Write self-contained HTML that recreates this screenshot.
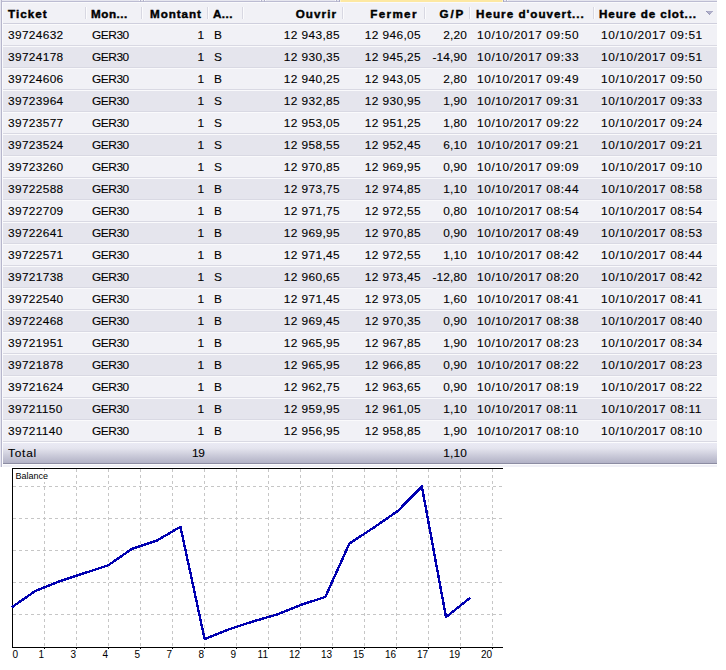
<!DOCTYPE html>
<html><head><meta charset="utf-8">
<style>
:root{--odd:#f1f1f6;--even:#e5e5ed;--sepc:#d9d9e3;--wl:#fafafc;}
html,body{margin:0;padding:0;background:#fff;width:726px;height:670px;overflow:hidden;position:relative;}
.abs,.row,.sep,.t,.lab{position:absolute;}
.t{font-family:"Liberation Sans",sans-serif;font-size:11px;line-height:22px;height:22px;white-space:pre;color:#000;-webkit-text-stroke:0.1px #000;}
.b{font-weight:bold;-webkit-text-stroke:0.4px #000;}
.row{left:3px;width:714px;height:20px;border-top:1px solid var(--wl);border-bottom:1px solid var(--sepc);}
.sep{top:7px;width:1px;height:12px;background:#d8d8e2;border-right:1px solid #fbfbfd;}
.lab{font-family:"Liberation Sans",sans-serif;font-size:10px;line-height:12px;white-space:pre;color:#000;}
svg{position:absolute;left:0;top:0;}
.g{stroke:#c6c6c6;stroke-width:1;stroke-dasharray:3 3;stroke-dashoffset:0;}
.gh{stroke:#c6c6c6;stroke-width:1;stroke-dasharray:3 3;}
</style></head><body>
<!-- table frame -->
<div class="abs" style="left:0;top:0;width:717px;height:467px;background:#e6e6ef"></div>
<div class="abs" style="left:1px;top:0;width:1px;height:467px;background:#b6b6cc"></div>
<div class="abs" style="left:2px;top:1px;width:715px;height:1px;background:#bcbcd2"></div>
<div class="abs" style="left:2px;top:2px;width:715px;height:1px;background:#fafafc"></div>
<div class="abs" style="left:2px;top:2px;width:1px;height:462px;background:#fafafc"></div>
<div class="abs" style="left:341px;top:0;width:161px;height:2px;background:#fde8a2"></div>
<div class="abs" style="left:139px;top:0;width:1px;height:1px;background:#fbfbfd"></div><div class="abs" style="left:140px;top:0;width:1px;height:2px;background:#b4b4cc"></div><div class="abs" style="left:141px;top:0;width:2px;height:1px;background:#ececf3"></div><div class="abs" style="left:143px;top:0;width:1px;height:2px;background:#b4b4cc"></div><div class="abs" style="left:144px;top:0;width:1px;height:1px;background:#fbfbfd"></div><div class="abs" style="left:260px;top:0;width:1px;height:1px;background:#fbfbfd"></div><div class="abs" style="left:261px;top:0;width:1px;height:2px;background:#b4b4cc"></div><div class="abs" style="left:262px;top:0;width:2px;height:1px;background:#ececf3"></div><div class="abs" style="left:264px;top:0;width:1px;height:2px;background:#b4b4cc"></div><div class="abs" style="left:265px;top:0;width:1px;height:1px;background:#fbfbfd"></div><div class="abs" style="left:335px;top:0;width:1px;height:1px;background:#fbfbfd"></div><div class="abs" style="left:336px;top:0;width:1px;height:2px;background:#b4b4cc"></div><div class="abs" style="left:337px;top:0;width:2px;height:1px;background:#ececf3"></div><div class="abs" style="left:339px;top:0;width:1px;height:2px;background:#a8a8c6"></div><div class="abs" style="left:340px;top:0;width:1px;height:2px;background:#fff3c4"></div><div class="abs" style="left:502px;top:0;width:1px;height:2px;background:#fff3c4"></div><div class="abs" style="left:503px;top:0;width:1px;height:2px;background:#a8a8c6"></div><div class="abs" style="left:504px;top:0;width:2px;height:1px;background:#ececf3"></div><div class="abs" style="left:506px;top:0;width:1px;height:2px;background:#b4b4cc"></div><div class="abs" style="left:507px;top:0;width:1px;height:1px;background:#fbfbfd"></div>
<div class="abs" style="left:3px;top:3px;width:714px;height:20px;background:#f1f1f6"></div>
<div class="abs" style="left:3px;top:23px;width:714px;height:1px;background:#cfcfdd"></div>
<div class="sep" style="left:85px"></div>
<div class="sep" style="left:141px"></div>
<div class="sep" style="left:207px"></div>
<div class="sep" style="left:242px"></div>
<div class="sep" style="left:342px"></div>
<div class="sep" style="left:424px"></div>
<div class="sep" style="left:469px"></div>
<div class="sep" style="left:593px"></div>
<div class="abs" style="left:706px;top:11px;width:7px;height:1px;background:#acacc8"></div>
<div class="abs" style="left:707px;top:12px;width:5px;height:1px;background:#b4b4cc"></div>
<div class="abs" style="left:708px;top:13px;width:3px;height:1px;background:#a8a8c4"></div>
<div class="abs" style="left:709px;top:14px;width:1px;height:1px;background:#9c9cbc"></div>
<div class="abs" style="left:706px;top:11px;width:1px;height:1px;background:#9494b6"></div>
<div class="abs" style="left:707px;top:12px;width:1px;height:1px;background:#9898b8"></div>
<div class="abs" style="left:708px;top:13px;width:1px;height:1px;background:#9898b8"></div>
<div class="row" style="top:24px;background:var(--odd)"></div>
<div class="row" style="top:46px;background:var(--even)"></div>
<div class="row" style="top:68px;background:var(--odd)"></div>
<div class="row" style="top:90px;background:var(--even)"></div>
<div class="row" style="top:112px;background:var(--odd)"></div>
<div class="row" style="top:134px;background:var(--even)"></div>
<div class="row" style="top:156px;background:var(--odd)"></div>
<div class="row" style="top:178px;background:var(--even)"></div>
<div class="row" style="top:200px;background:var(--odd)"></div>
<div class="row" style="top:222px;background:var(--even)"></div>
<div class="row" style="top:244px;background:var(--odd)"></div>
<div class="row" style="top:266px;background:var(--even)"></div>
<div class="row" style="top:288px;background:var(--odd)"></div>
<div class="row" style="top:310px;background:var(--even)"></div>
<div class="row" style="top:332px;background:var(--odd)"></div>
<div class="row" style="top:354px;background:var(--even)"></div>
<div class="row" style="top:376px;background:var(--odd)"></div>
<div class="row" style="top:398px;background:var(--even)"></div>
<div class="row" style="top:420px;background:var(--odd)"></div>
<div class="abs" style="left:3px;top:442px;width:714px;height:1px;background:#fcfcfe"></div>
<div class="abs" style="left:3px;top:443px;width:714px;height:20px;background:linear-gradient(#eaeaf4 0%,#e5e5ef 25%,#cbcbda 62%,#b2b2c6 100%)"></div>
<div class="abs" style="left:3px;top:463px;width:714px;height:1px;background:#8c8ca2"></div>
<div class="abs" style="left:3px;top:464px;width:714px;height:1px;background:#fbfbfd"></div>
<div class="abs" style="left:3px;top:465px;width:714px;height:2px;background:#f0f0f6"></div>
<div class="abs" style="left:2px;top:464px;width:1px;height:3px;background:#fafafc"></div>
<div class="t b" style="left:7.97px;top:3px;letter-spacing:0.964px;transform:scaleX(1.06);transform-origin:0 0">Ticket</div>
<div class="t b" style="left:91.47px;top:3px;letter-spacing:0.493px;transform:scaleX(1.06);transform-origin:0 0">Mon...</div>
<div class="t b r" style="right:523.98px;top:3px;letter-spacing:0.844px;transform:scaleX(1.06);transform-origin:100% 0">Montant</div>
<div class="t b" style="left:213.17px;top:3px;letter-spacing:0.424px;transform:scaleX(1.06);transform-origin:0 0">A...</div>
<div class="t b r" style="right:388.37px;top:3px;letter-spacing:1.038px;transform:scaleX(1.06);transform-origin:100% 0">Ouvrir</div>
<div class="t b r" style="right:307.86px;top:3px;letter-spacing:1.239px;transform:scaleX(1.06);transform-origin:100% 0">Fermer</div>
<div class="t b r" style="right:261.32px;top:3px;letter-spacing:1.656px;transform:scaleX(1.06);transform-origin:100% 0">G/P</div>
<div class="t b" style="left:475.97px;top:3px;letter-spacing:0.959px;transform:scaleX(1.06);transform-origin:0 0">Heure d'ouvert...</div>
<div class="t b" style="left:599.27px;top:3px;letter-spacing:0.850px;transform:scaleX(1.06);transform-origin:0 0">Heure de clot...</div>
<div class="t" style="left:8.46px;top:24px;letter-spacing:0.308px;transform:scaleX(1.08);transform-origin:0 0">39724632</div>
<div class="t" style="left:92.36px;top:24px;letter-spacing:-0.408px;transform:scaleX(1.08);transform-origin:0 0">GER30</div>
<div class="t r" style="right:521.76px;top:24px;letter-spacing:0.000px;transform:scaleX(1.08);transform-origin:100% 0">1</div>
<div class="t" style="left:214.46px;top:24px;letter-spacing:0.000px;transform:scaleX(1.08);transform-origin:0 0">B</div>
<div class="t r" style="right:386.49px;top:24px;letter-spacing:0.341px;transform:scaleX(1.08);transform-origin:100% 0">12 943,85</div>
<div class="t r" style="right:305.49px;top:24px;letter-spacing:0.341px;transform:scaleX(1.08);transform-origin:100% 0">12 946,05</div>
<div class="t r" style="right:259.41px;top:24px;letter-spacing:0.143px;transform:scaleX(1.08);transform-origin:100% 0">2,20</div>
<div class="t" style="left:476.76px;top:24px;letter-spacing:0.556px;transform:scaleX(1.08);transform-origin:0 0">10/10/2017 09:50</div>
<div class="t" style="left:600.96px;top:24px;letter-spacing:0.538px;transform:scaleX(1.08);transform-origin:0 0">10/10/2017 09:51</div>
<div class="t" style="left:8.46px;top:46px;letter-spacing:0.308px;transform:scaleX(1.08);transform-origin:0 0">39724178</div>
<div class="t" style="left:92.36px;top:46px;letter-spacing:-0.408px;transform:scaleX(1.08);transform-origin:0 0">GER30</div>
<div class="t r" style="right:521.76px;top:46px;letter-spacing:0.000px;transform:scaleX(1.08);transform-origin:100% 0">1</div>
<div class="t" style="left:214.46px;top:46px;letter-spacing:0.000px;transform:scaleX(1.08);transform-origin:0 0">S</div>
<div class="t r" style="right:386.49px;top:46px;letter-spacing:0.341px;transform:scaleX(1.08);transform-origin:100% 0">12 930,35</div>
<div class="t r" style="right:305.49px;top:46px;letter-spacing:0.341px;transform:scaleX(1.08);transform-origin:100% 0">12 945,25</div>
<div class="t r" style="right:259.41px;top:46px;letter-spacing:0.143px;transform:scaleX(1.08);transform-origin:100% 0">-14,90</div>
<div class="t" style="left:476.76px;top:46px;letter-spacing:0.556px;transform:scaleX(1.08);transform-origin:0 0">10/10/2017 09:33</div>
<div class="t" style="left:600.96px;top:46px;letter-spacing:0.538px;transform:scaleX(1.08);transform-origin:0 0">10/10/2017 09:51</div>
<div class="t" style="left:8.46px;top:68px;letter-spacing:0.308px;transform:scaleX(1.08);transform-origin:0 0">39724606</div>
<div class="t" style="left:92.36px;top:68px;letter-spacing:-0.408px;transform:scaleX(1.08);transform-origin:0 0">GER30</div>
<div class="t r" style="right:521.76px;top:68px;letter-spacing:0.000px;transform:scaleX(1.08);transform-origin:100% 0">1</div>
<div class="t" style="left:214.46px;top:68px;letter-spacing:0.000px;transform:scaleX(1.08);transform-origin:0 0">B</div>
<div class="t r" style="right:386.49px;top:68px;letter-spacing:0.341px;transform:scaleX(1.08);transform-origin:100% 0">12 940,25</div>
<div class="t r" style="right:305.49px;top:68px;letter-spacing:0.341px;transform:scaleX(1.08);transform-origin:100% 0">12 943,05</div>
<div class="t r" style="right:259.41px;top:68px;letter-spacing:0.143px;transform:scaleX(1.08);transform-origin:100% 0">2,80</div>
<div class="t" style="left:476.76px;top:68px;letter-spacing:0.556px;transform:scaleX(1.08);transform-origin:0 0">10/10/2017 09:49</div>
<div class="t" style="left:600.96px;top:68px;letter-spacing:0.538px;transform:scaleX(1.08);transform-origin:0 0">10/10/2017 09:50</div>
<div class="t" style="left:8.46px;top:90px;letter-spacing:0.308px;transform:scaleX(1.08);transform-origin:0 0">39723964</div>
<div class="t" style="left:92.36px;top:90px;letter-spacing:-0.408px;transform:scaleX(1.08);transform-origin:0 0">GER30</div>
<div class="t r" style="right:521.76px;top:90px;letter-spacing:0.000px;transform:scaleX(1.08);transform-origin:100% 0">1</div>
<div class="t" style="left:214.46px;top:90px;letter-spacing:0.000px;transform:scaleX(1.08);transform-origin:0 0">S</div>
<div class="t r" style="right:386.49px;top:90px;letter-spacing:0.341px;transform:scaleX(1.08);transform-origin:100% 0">12 932,85</div>
<div class="t r" style="right:305.49px;top:90px;letter-spacing:0.341px;transform:scaleX(1.08);transform-origin:100% 0">12 930,95</div>
<div class="t r" style="right:259.41px;top:90px;letter-spacing:0.143px;transform:scaleX(1.08);transform-origin:100% 0">1,90</div>
<div class="t" style="left:476.76px;top:90px;letter-spacing:0.556px;transform:scaleX(1.08);transform-origin:0 0">10/10/2017 09:31</div>
<div class="t" style="left:600.96px;top:90px;letter-spacing:0.538px;transform:scaleX(1.08);transform-origin:0 0">10/10/2017 09:33</div>
<div class="t" style="left:8.46px;top:112px;letter-spacing:0.308px;transform:scaleX(1.08);transform-origin:0 0">39723577</div>
<div class="t" style="left:92.36px;top:112px;letter-spacing:-0.408px;transform:scaleX(1.08);transform-origin:0 0">GER30</div>
<div class="t r" style="right:521.76px;top:112px;letter-spacing:0.000px;transform:scaleX(1.08);transform-origin:100% 0">1</div>
<div class="t" style="left:214.46px;top:112px;letter-spacing:0.000px;transform:scaleX(1.08);transform-origin:0 0">S</div>
<div class="t r" style="right:386.49px;top:112px;letter-spacing:0.341px;transform:scaleX(1.08);transform-origin:100% 0">12 953,05</div>
<div class="t r" style="right:305.49px;top:112px;letter-spacing:0.341px;transform:scaleX(1.08);transform-origin:100% 0">12 951,25</div>
<div class="t r" style="right:259.41px;top:112px;letter-spacing:0.143px;transform:scaleX(1.08);transform-origin:100% 0">1,80</div>
<div class="t" style="left:476.76px;top:112px;letter-spacing:0.556px;transform:scaleX(1.08);transform-origin:0 0">10/10/2017 09:22</div>
<div class="t" style="left:600.96px;top:112px;letter-spacing:0.538px;transform:scaleX(1.08);transform-origin:0 0">10/10/2017 09:24</div>
<div class="t" style="left:8.46px;top:134px;letter-spacing:0.308px;transform:scaleX(1.08);transform-origin:0 0">39723524</div>
<div class="t" style="left:92.36px;top:134px;letter-spacing:-0.408px;transform:scaleX(1.08);transform-origin:0 0">GER30</div>
<div class="t r" style="right:521.76px;top:134px;letter-spacing:0.000px;transform:scaleX(1.08);transform-origin:100% 0">1</div>
<div class="t" style="left:214.46px;top:134px;letter-spacing:0.000px;transform:scaleX(1.08);transform-origin:0 0">S</div>
<div class="t r" style="right:386.49px;top:134px;letter-spacing:0.341px;transform:scaleX(1.08);transform-origin:100% 0">12 958,55</div>
<div class="t r" style="right:305.49px;top:134px;letter-spacing:0.341px;transform:scaleX(1.08);transform-origin:100% 0">12 952,45</div>
<div class="t r" style="right:259.41px;top:134px;letter-spacing:0.143px;transform:scaleX(1.08);transform-origin:100% 0">6,10</div>
<div class="t" style="left:476.76px;top:134px;letter-spacing:0.556px;transform:scaleX(1.08);transform-origin:0 0">10/10/2017 09:21</div>
<div class="t" style="left:600.96px;top:134px;letter-spacing:0.538px;transform:scaleX(1.08);transform-origin:0 0">10/10/2017 09:21</div>
<div class="t" style="left:8.46px;top:156px;letter-spacing:0.308px;transform:scaleX(1.08);transform-origin:0 0">39723260</div>
<div class="t" style="left:92.36px;top:156px;letter-spacing:-0.408px;transform:scaleX(1.08);transform-origin:0 0">GER30</div>
<div class="t r" style="right:521.76px;top:156px;letter-spacing:0.000px;transform:scaleX(1.08);transform-origin:100% 0">1</div>
<div class="t" style="left:214.46px;top:156px;letter-spacing:0.000px;transform:scaleX(1.08);transform-origin:0 0">S</div>
<div class="t r" style="right:386.49px;top:156px;letter-spacing:0.341px;transform:scaleX(1.08);transform-origin:100% 0">12 970,85</div>
<div class="t r" style="right:305.49px;top:156px;letter-spacing:0.341px;transform:scaleX(1.08);transform-origin:100% 0">12 969,95</div>
<div class="t r" style="right:259.41px;top:156px;letter-spacing:0.143px;transform:scaleX(1.08);transform-origin:100% 0">0,90</div>
<div class="t" style="left:476.76px;top:156px;letter-spacing:0.556px;transform:scaleX(1.08);transform-origin:0 0">10/10/2017 09:09</div>
<div class="t" style="left:600.96px;top:156px;letter-spacing:0.538px;transform:scaleX(1.08);transform-origin:0 0">10/10/2017 09:10</div>
<div class="t" style="left:8.46px;top:178px;letter-spacing:0.308px;transform:scaleX(1.08);transform-origin:0 0">39722588</div>
<div class="t" style="left:92.36px;top:178px;letter-spacing:-0.408px;transform:scaleX(1.08);transform-origin:0 0">GER30</div>
<div class="t r" style="right:521.76px;top:178px;letter-spacing:0.000px;transform:scaleX(1.08);transform-origin:100% 0">1</div>
<div class="t" style="left:214.46px;top:178px;letter-spacing:0.000px;transform:scaleX(1.08);transform-origin:0 0">B</div>
<div class="t r" style="right:386.49px;top:178px;letter-spacing:0.341px;transform:scaleX(1.08);transform-origin:100% 0">12 973,75</div>
<div class="t r" style="right:305.49px;top:178px;letter-spacing:0.341px;transform:scaleX(1.08);transform-origin:100% 0">12 974,85</div>
<div class="t r" style="right:259.41px;top:178px;letter-spacing:0.143px;transform:scaleX(1.08);transform-origin:100% 0">1,10</div>
<div class="t" style="left:476.76px;top:178px;letter-spacing:0.556px;transform:scaleX(1.08);transform-origin:0 0">10/10/2017 08:44</div>
<div class="t" style="left:600.96px;top:178px;letter-spacing:0.538px;transform:scaleX(1.08);transform-origin:0 0">10/10/2017 08:58</div>
<div class="t" style="left:8.46px;top:200px;letter-spacing:0.308px;transform:scaleX(1.08);transform-origin:0 0">39722709</div>
<div class="t" style="left:92.36px;top:200px;letter-spacing:-0.408px;transform:scaleX(1.08);transform-origin:0 0">GER30</div>
<div class="t r" style="right:521.76px;top:200px;letter-spacing:0.000px;transform:scaleX(1.08);transform-origin:100% 0">1</div>
<div class="t" style="left:214.46px;top:200px;letter-spacing:0.000px;transform:scaleX(1.08);transform-origin:0 0">B</div>
<div class="t r" style="right:386.49px;top:200px;letter-spacing:0.341px;transform:scaleX(1.08);transform-origin:100% 0">12 971,75</div>
<div class="t r" style="right:305.49px;top:200px;letter-spacing:0.341px;transform:scaleX(1.08);transform-origin:100% 0">12 972,55</div>
<div class="t r" style="right:259.41px;top:200px;letter-spacing:0.143px;transform:scaleX(1.08);transform-origin:100% 0">0,80</div>
<div class="t" style="left:476.76px;top:200px;letter-spacing:0.556px;transform:scaleX(1.08);transform-origin:0 0">10/10/2017 08:54</div>
<div class="t" style="left:600.96px;top:200px;letter-spacing:0.538px;transform:scaleX(1.08);transform-origin:0 0">10/10/2017 08:54</div>
<div class="t" style="left:8.46px;top:222px;letter-spacing:0.308px;transform:scaleX(1.08);transform-origin:0 0">39722641</div>
<div class="t" style="left:92.36px;top:222px;letter-spacing:-0.408px;transform:scaleX(1.08);transform-origin:0 0">GER30</div>
<div class="t r" style="right:521.76px;top:222px;letter-spacing:0.000px;transform:scaleX(1.08);transform-origin:100% 0">1</div>
<div class="t" style="left:214.46px;top:222px;letter-spacing:0.000px;transform:scaleX(1.08);transform-origin:0 0">B</div>
<div class="t r" style="right:386.49px;top:222px;letter-spacing:0.341px;transform:scaleX(1.08);transform-origin:100% 0">12 969,95</div>
<div class="t r" style="right:305.49px;top:222px;letter-spacing:0.341px;transform:scaleX(1.08);transform-origin:100% 0">12 970,85</div>
<div class="t r" style="right:259.41px;top:222px;letter-spacing:0.143px;transform:scaleX(1.08);transform-origin:100% 0">0,90</div>
<div class="t" style="left:476.76px;top:222px;letter-spacing:0.556px;transform:scaleX(1.08);transform-origin:0 0">10/10/2017 08:49</div>
<div class="t" style="left:600.96px;top:222px;letter-spacing:0.538px;transform:scaleX(1.08);transform-origin:0 0">10/10/2017 08:53</div>
<div class="t" style="left:8.46px;top:244px;letter-spacing:0.308px;transform:scaleX(1.08);transform-origin:0 0">39722571</div>
<div class="t" style="left:92.36px;top:244px;letter-spacing:-0.408px;transform:scaleX(1.08);transform-origin:0 0">GER30</div>
<div class="t r" style="right:521.76px;top:244px;letter-spacing:0.000px;transform:scaleX(1.08);transform-origin:100% 0">1</div>
<div class="t" style="left:214.46px;top:244px;letter-spacing:0.000px;transform:scaleX(1.08);transform-origin:0 0">B</div>
<div class="t r" style="right:386.49px;top:244px;letter-spacing:0.341px;transform:scaleX(1.08);transform-origin:100% 0">12 971,45</div>
<div class="t r" style="right:305.49px;top:244px;letter-spacing:0.341px;transform:scaleX(1.08);transform-origin:100% 0">12 972,55</div>
<div class="t r" style="right:259.41px;top:244px;letter-spacing:0.143px;transform:scaleX(1.08);transform-origin:100% 0">1,10</div>
<div class="t" style="left:476.76px;top:244px;letter-spacing:0.556px;transform:scaleX(1.08);transform-origin:0 0">10/10/2017 08:42</div>
<div class="t" style="left:600.96px;top:244px;letter-spacing:0.538px;transform:scaleX(1.08);transform-origin:0 0">10/10/2017 08:44</div>
<div class="t" style="left:8.46px;top:266px;letter-spacing:0.308px;transform:scaleX(1.08);transform-origin:0 0">39721738</div>
<div class="t" style="left:92.36px;top:266px;letter-spacing:-0.408px;transform:scaleX(1.08);transform-origin:0 0">GER30</div>
<div class="t r" style="right:521.76px;top:266px;letter-spacing:0.000px;transform:scaleX(1.08);transform-origin:100% 0">1</div>
<div class="t" style="left:214.46px;top:266px;letter-spacing:0.000px;transform:scaleX(1.08);transform-origin:0 0">S</div>
<div class="t r" style="right:386.49px;top:266px;letter-spacing:0.341px;transform:scaleX(1.08);transform-origin:100% 0">12 960,65</div>
<div class="t r" style="right:305.49px;top:266px;letter-spacing:0.341px;transform:scaleX(1.08);transform-origin:100% 0">12 973,45</div>
<div class="t r" style="right:259.41px;top:266px;letter-spacing:0.143px;transform:scaleX(1.08);transform-origin:100% 0">-12,80</div>
<div class="t" style="left:476.76px;top:266px;letter-spacing:0.556px;transform:scaleX(1.08);transform-origin:0 0">10/10/2017 08:20</div>
<div class="t" style="left:600.96px;top:266px;letter-spacing:0.538px;transform:scaleX(1.08);transform-origin:0 0">10/10/2017 08:42</div>
<div class="t" style="left:8.46px;top:288px;letter-spacing:0.308px;transform:scaleX(1.08);transform-origin:0 0">39722540</div>
<div class="t" style="left:92.36px;top:288px;letter-spacing:-0.408px;transform:scaleX(1.08);transform-origin:0 0">GER30</div>
<div class="t r" style="right:521.76px;top:288px;letter-spacing:0.000px;transform:scaleX(1.08);transform-origin:100% 0">1</div>
<div class="t" style="left:214.46px;top:288px;letter-spacing:0.000px;transform:scaleX(1.08);transform-origin:0 0">B</div>
<div class="t r" style="right:386.49px;top:288px;letter-spacing:0.341px;transform:scaleX(1.08);transform-origin:100% 0">12 971,45</div>
<div class="t r" style="right:305.49px;top:288px;letter-spacing:0.341px;transform:scaleX(1.08);transform-origin:100% 0">12 973,05</div>
<div class="t r" style="right:259.41px;top:288px;letter-spacing:0.143px;transform:scaleX(1.08);transform-origin:100% 0">1,60</div>
<div class="t" style="left:476.76px;top:288px;letter-spacing:0.556px;transform:scaleX(1.08);transform-origin:0 0">10/10/2017 08:41</div>
<div class="t" style="left:600.96px;top:288px;letter-spacing:0.538px;transform:scaleX(1.08);transform-origin:0 0">10/10/2017 08:41</div>
<div class="t" style="left:8.46px;top:310px;letter-spacing:0.308px;transform:scaleX(1.08);transform-origin:0 0">39722468</div>
<div class="t" style="left:92.36px;top:310px;letter-spacing:-0.408px;transform:scaleX(1.08);transform-origin:0 0">GER30</div>
<div class="t r" style="right:521.76px;top:310px;letter-spacing:0.000px;transform:scaleX(1.08);transform-origin:100% 0">1</div>
<div class="t" style="left:214.46px;top:310px;letter-spacing:0.000px;transform:scaleX(1.08);transform-origin:0 0">B</div>
<div class="t r" style="right:386.49px;top:310px;letter-spacing:0.341px;transform:scaleX(1.08);transform-origin:100% 0">12 969,45</div>
<div class="t r" style="right:305.49px;top:310px;letter-spacing:0.341px;transform:scaleX(1.08);transform-origin:100% 0">12 970,35</div>
<div class="t r" style="right:259.41px;top:310px;letter-spacing:0.143px;transform:scaleX(1.08);transform-origin:100% 0">0,90</div>
<div class="t" style="left:476.76px;top:310px;letter-spacing:0.556px;transform:scaleX(1.08);transform-origin:0 0">10/10/2017 08:38</div>
<div class="t" style="left:600.96px;top:310px;letter-spacing:0.538px;transform:scaleX(1.08);transform-origin:0 0">10/10/2017 08:40</div>
<div class="t" style="left:8.46px;top:332px;letter-spacing:0.308px;transform:scaleX(1.08);transform-origin:0 0">39721951</div>
<div class="t" style="left:92.36px;top:332px;letter-spacing:-0.408px;transform:scaleX(1.08);transform-origin:0 0">GER30</div>
<div class="t r" style="right:521.76px;top:332px;letter-spacing:0.000px;transform:scaleX(1.08);transform-origin:100% 0">1</div>
<div class="t" style="left:214.46px;top:332px;letter-spacing:0.000px;transform:scaleX(1.08);transform-origin:0 0">B</div>
<div class="t r" style="right:386.49px;top:332px;letter-spacing:0.341px;transform:scaleX(1.08);transform-origin:100% 0">12 965,95</div>
<div class="t r" style="right:305.49px;top:332px;letter-spacing:0.341px;transform:scaleX(1.08);transform-origin:100% 0">12 967,85</div>
<div class="t r" style="right:259.41px;top:332px;letter-spacing:0.143px;transform:scaleX(1.08);transform-origin:100% 0">1,90</div>
<div class="t" style="left:476.76px;top:332px;letter-spacing:0.556px;transform:scaleX(1.08);transform-origin:0 0">10/10/2017 08:23</div>
<div class="t" style="left:600.96px;top:332px;letter-spacing:0.538px;transform:scaleX(1.08);transform-origin:0 0">10/10/2017 08:34</div>
<div class="t" style="left:8.46px;top:354px;letter-spacing:0.308px;transform:scaleX(1.08);transform-origin:0 0">39721878</div>
<div class="t" style="left:92.36px;top:354px;letter-spacing:-0.408px;transform:scaleX(1.08);transform-origin:0 0">GER30</div>
<div class="t r" style="right:521.76px;top:354px;letter-spacing:0.000px;transform:scaleX(1.08);transform-origin:100% 0">1</div>
<div class="t" style="left:214.46px;top:354px;letter-spacing:0.000px;transform:scaleX(1.08);transform-origin:0 0">B</div>
<div class="t r" style="right:386.49px;top:354px;letter-spacing:0.341px;transform:scaleX(1.08);transform-origin:100% 0">12 965,95</div>
<div class="t r" style="right:305.49px;top:354px;letter-spacing:0.341px;transform:scaleX(1.08);transform-origin:100% 0">12 966,85</div>
<div class="t r" style="right:259.41px;top:354px;letter-spacing:0.143px;transform:scaleX(1.08);transform-origin:100% 0">0,90</div>
<div class="t" style="left:476.76px;top:354px;letter-spacing:0.556px;transform:scaleX(1.08);transform-origin:0 0">10/10/2017 08:22</div>
<div class="t" style="left:600.96px;top:354px;letter-spacing:0.538px;transform:scaleX(1.08);transform-origin:0 0">10/10/2017 08:23</div>
<div class="t" style="left:8.46px;top:376px;letter-spacing:0.308px;transform:scaleX(1.08);transform-origin:0 0">39721624</div>
<div class="t" style="left:92.36px;top:376px;letter-spacing:-0.408px;transform:scaleX(1.08);transform-origin:0 0">GER30</div>
<div class="t r" style="right:521.76px;top:376px;letter-spacing:0.000px;transform:scaleX(1.08);transform-origin:100% 0">1</div>
<div class="t" style="left:214.46px;top:376px;letter-spacing:0.000px;transform:scaleX(1.08);transform-origin:0 0">B</div>
<div class="t r" style="right:386.49px;top:376px;letter-spacing:0.341px;transform:scaleX(1.08);transform-origin:100% 0">12 962,75</div>
<div class="t r" style="right:305.49px;top:376px;letter-spacing:0.341px;transform:scaleX(1.08);transform-origin:100% 0">12 963,65</div>
<div class="t r" style="right:259.41px;top:376px;letter-spacing:0.143px;transform:scaleX(1.08);transform-origin:100% 0">0,90</div>
<div class="t" style="left:476.76px;top:376px;letter-spacing:0.556px;transform:scaleX(1.08);transform-origin:0 0">10/10/2017 08:19</div>
<div class="t" style="left:600.96px;top:376px;letter-spacing:0.538px;transform:scaleX(1.08);transform-origin:0 0">10/10/2017 08:22</div>
<div class="t" style="left:8.46px;top:398px;letter-spacing:0.308px;transform:scaleX(1.08);transform-origin:0 0">39721150</div>
<div class="t" style="left:92.36px;top:398px;letter-spacing:-0.408px;transform:scaleX(1.08);transform-origin:0 0">GER30</div>
<div class="t r" style="right:521.76px;top:398px;letter-spacing:0.000px;transform:scaleX(1.08);transform-origin:100% 0">1</div>
<div class="t" style="left:214.46px;top:398px;letter-spacing:0.000px;transform:scaleX(1.08);transform-origin:0 0">B</div>
<div class="t r" style="right:386.49px;top:398px;letter-spacing:0.341px;transform:scaleX(1.08);transform-origin:100% 0">12 959,95</div>
<div class="t r" style="right:305.49px;top:398px;letter-spacing:0.341px;transform:scaleX(1.08);transform-origin:100% 0">12 961,05</div>
<div class="t r" style="right:259.41px;top:398px;letter-spacing:0.143px;transform:scaleX(1.08);transform-origin:100% 0">1,10</div>
<div class="t" style="left:476.76px;top:398px;letter-spacing:0.556px;transform:scaleX(1.08);transform-origin:0 0">10/10/2017 08:11</div>
<div class="t" style="left:600.96px;top:398px;letter-spacing:0.538px;transform:scaleX(1.08);transform-origin:0 0">10/10/2017 08:11</div>
<div class="t" style="left:8.46px;top:420px;letter-spacing:0.308px;transform:scaleX(1.08);transform-origin:0 0">39721140</div>
<div class="t" style="left:92.36px;top:420px;letter-spacing:-0.408px;transform:scaleX(1.08);transform-origin:0 0">GER30</div>
<div class="t r" style="right:521.76px;top:420px;letter-spacing:0.000px;transform:scaleX(1.08);transform-origin:100% 0">1</div>
<div class="t" style="left:214.46px;top:420px;letter-spacing:0.000px;transform:scaleX(1.08);transform-origin:0 0">B</div>
<div class="t r" style="right:386.49px;top:420px;letter-spacing:0.341px;transform:scaleX(1.08);transform-origin:100% 0">12 956,95</div>
<div class="t r" style="right:305.49px;top:420px;letter-spacing:0.341px;transform:scaleX(1.08);transform-origin:100% 0">12 958,85</div>
<div class="t r" style="right:259.41px;top:420px;letter-spacing:0.143px;transform:scaleX(1.08);transform-origin:100% 0">1,90</div>
<div class="t" style="left:476.76px;top:420px;letter-spacing:0.556px;transform:scaleX(1.08);transform-origin:0 0">10/10/2017 08:10</div>
<div class="t" style="left:600.96px;top:420px;letter-spacing:0.538px;transform:scaleX(1.08);transform-origin:0 0">10/10/2017 08:10</div>
<div class="t" style="left:8.26px;top:442px;letter-spacing:0.715px;transform:scaleX(1.08);transform-origin:0 0">Total</div>
<div class="t r" style="right:521.49px;top:442px;letter-spacing:-0.491px;transform:scaleX(1.08);transform-origin:100% 0">19</div>
<div class="t r" style="right:258.91px;top:442px;letter-spacing:0.143px;transform:scaleX(1.08);transform-origin:100% 0">1,10</div>
<svg width="726" height="670" viewBox="0 0 726 670">
<line x1="44.5" y1="469" x2="44.5" y2="647" class="g"/><line x1="76.5" y1="469" x2="76.5" y2="647" class="g"/><line x1="108.5" y1="469" x2="108.5" y2="647" class="g"/><line x1="140.5" y1="469" x2="140.5" y2="647" class="g"/><line x1="172.5" y1="469" x2="172.5" y2="647" class="g"/><line x1="204.5" y1="469" x2="204.5" y2="647" class="g"/><line x1="236.5" y1="469" x2="236.5" y2="647" class="g"/><line x1="268.5" y1="469" x2="268.5" y2="647" class="g"/><line x1="300.5" y1="469" x2="300.5" y2="647" class="g"/><line x1="332.5" y1="469" x2="332.5" y2="647" class="g"/><line x1="364.5" y1="469" x2="364.5" y2="647" class="g"/><line x1="396.5" y1="469" x2="396.5" y2="647" class="g"/><line x1="428.5" y1="469" x2="428.5" y2="647" class="g"/><line x1="460.5" y1="469" x2="460.5" y2="647" class="g"/><line x1="492.5" y1="469" x2="492.5" y2="647" class="g"/><line x1="13" y1="486.5" x2="503" y2="486.5" class="gh"/><line x1="13" y1="518.5" x2="503" y2="518.5" class="gh"/><line x1="13" y1="550.5" x2="503" y2="550.5" class="gh"/><line x1="13" y1="582.5" x2="503" y2="582.5" class="gh"/><line x1="13" y1="614.5" x2="503" y2="614.5" class="gh"/>
<rect x="12" y="468" width="491" height="1" fill="#000"/>
<rect x="12" y="468" width="1" height="180" fill="#000"/>
<rect x="12" y="647" width="491" height="1" fill="#000"/>
<rect x="44" y="648" width="1" height="1" fill="#000"/><rect x="76" y="648" width="1" height="1" fill="#000"/><rect x="108" y="648" width="1" height="1" fill="#000"/><rect x="140" y="648" width="1" height="1" fill="#000"/><rect x="172" y="648" width="1" height="1" fill="#000"/><rect x="204" y="648" width="1" height="1" fill="#000"/><rect x="236" y="648" width="1" height="1" fill="#000"/><rect x="268" y="648" width="1" height="1" fill="#000"/><rect x="300" y="648" width="1" height="1" fill="#000"/><rect x="332" y="648" width="1" height="1" fill="#000"/><rect x="364" y="648" width="1" height="1" fill="#000"/><rect x="396" y="648" width="1" height="1" fill="#000"/><rect x="428" y="648" width="1" height="1" fill="#000"/><rect x="460" y="648" width="1" height="1" fill="#000"/><rect x="492" y="648" width="1" height="1" fill="#000"/>
<polyline points="11.50,607.45 35.64,590.80 59.78,581.16 83.92,573.27 108.06,565.38 132.20,548.73 156.34,540.84 180.48,526.82 204.62,639.00 228.76,629.36 252.90,621.47 277.04,614.46 301.18,604.82 325.32,596.93 349.46,543.47 373.60,527.70 397.74,511.05 421.88,486.51 446.02,617.09 470.16,597.81" fill="none" stroke="#0000b0" stroke-width="2.4" stroke-linejoin="round" shape-rendering="crispEdges"/>
</svg>
<div class="abs" style="left:13px;top:471px;width:35px;height:11px;background:#fff"></div>
<div class="lab" style="left:15.5px;top:470px;font-size:9px;letter-spacing:0px">Balance</div>
<div class="lab" style="left:12.5px;top:649px">0</div>
<div class="lab r" style="right:682.0px;top:649px">1</div>
<div class="lab r" style="right:650.0px;top:649px">3</div>
<div class="lab r" style="right:618.0px;top:649px">4</div>
<div class="lab r" style="right:586.0px;top:649px">5</div>
<div class="lab r" style="right:554.0px;top:649px">7</div>
<div class="lab r" style="right:522.0px;top:649px">8</div>
<div class="lab r" style="right:490.0px;top:649px">9</div>
<div class="lab r" style="right:458.0px;top:649px">11</div>
<div class="lab r" style="right:426.0px;top:649px">12</div>
<div class="lab r" style="right:394.0px;top:649px">13</div>
<div class="lab r" style="right:362.0px;top:649px">15</div>
<div class="lab r" style="right:330.0px;top:649px">16</div>
<div class="lab r" style="right:298.0px;top:649px">17</div>
<div class="lab r" style="right:266.0px;top:649px">19</div>
<div class="lab r" style="right:234.0px;top:649px">20</div>
</body></html>
